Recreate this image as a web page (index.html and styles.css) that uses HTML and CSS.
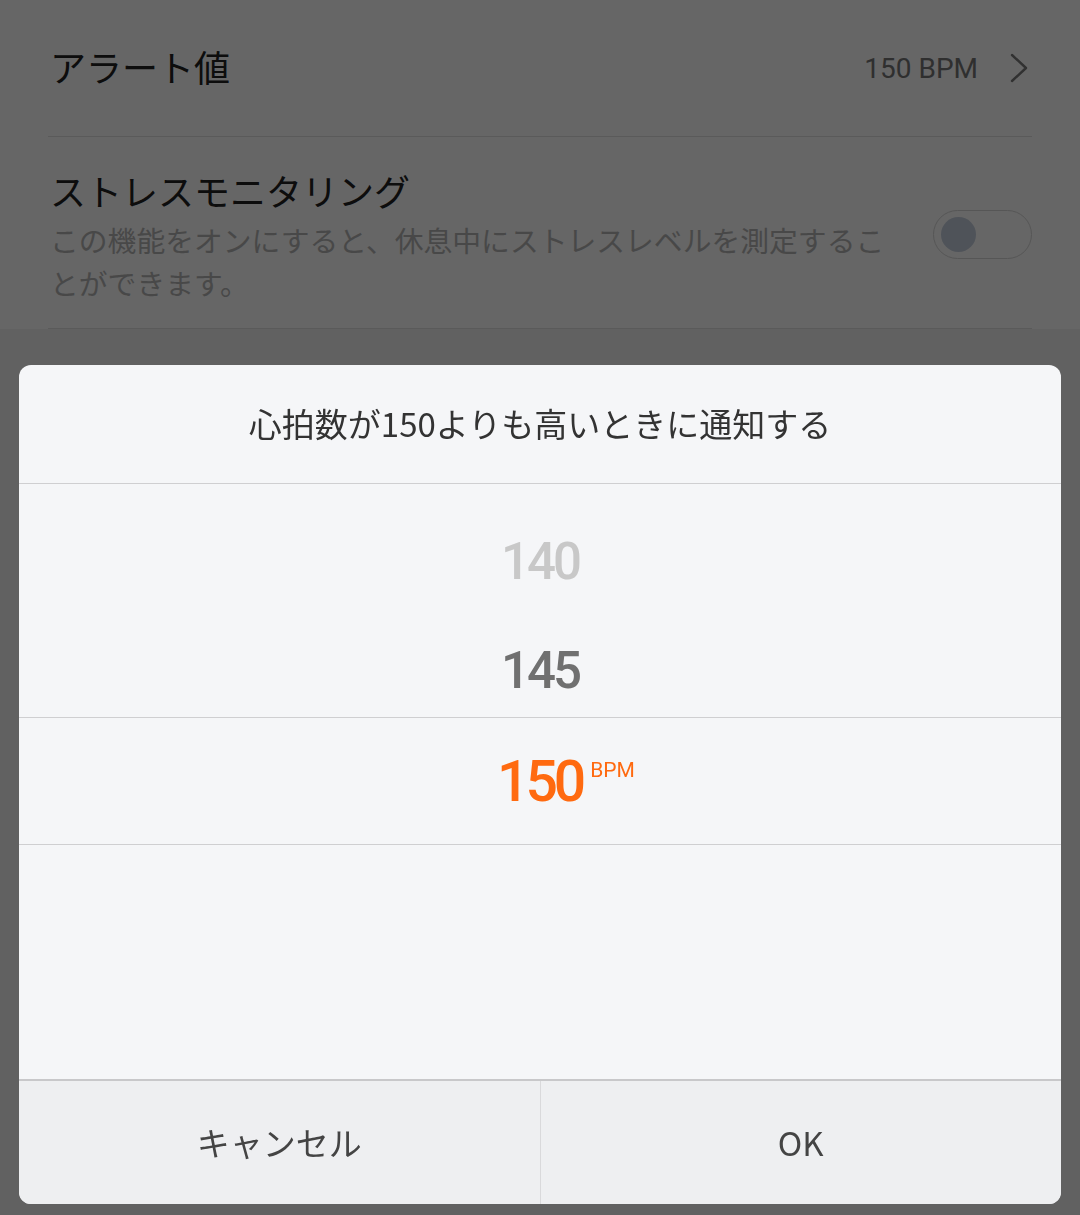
FILE: index.html
```html
<!DOCTYPE html>
<html lang="ja">
<head>
    <meta charset="UTF-8">
    <meta name="viewport" content="width=device-width, initial-scale=1.0">
    <title>心拍数アラート</title>
    <link rel="stylesheet" href="styles.css">
</head>
<body>
    <div class="settings">
        <div class="row">
            <div class="row-title row-title-single">アラート値</div>
            <div class="row-value">150 BPM</div>
            <svg class="chevron" width="18" height="30" viewBox="0 0 18 30">
                <polyline points="2,2 16,15 2,28" fill="none" stroke="#7a7a7a" stroke-width="2.4" stroke-linejoin="round" stroke-linecap="round"/>
            </svg>
        </div>
        <div class="row row-tall">
            <div class="row-text">
                <div class="row-title">ストレスモニタリング</div>
                <div class="row-sub">この機能をオンにすると、休息中にストレスレベルを測定することができます。</div>
            </div>
            <div class="toggle"><span class="knob"></span></div>
        </div>
    </div>

    <div class="overlay"></div>

    <div class="dialog">
        <div class="dialog-title">心拍数が150よりも高いときに通知する</div>
        <div class="picker">
            <div class="pick pick-far">140</div>
            <div class="pick pick-near">145</div>
            <div class="pick pick-selected">150<span class="unit">BPM</span></div>
        </div>
        <div class="dialog-buttons">
            <button class="btn">キャンセル</button>
            <button class="btn">OK</button>
        </div>
    </div>
</body>
</html>
```

FILE: styles.css
```css
body {
    margin: 0;
    height: 1215px;
    background-color: #f3f3f3;
    font-family: "Noto Sans CJK JP", Roboto, sans-serif;
    overflow: hidden;
}
.settings {
    background-color: #fff;
    padding: 0 48px;
}
.row {
    display: flex;
    align-items: center;
    height: 137px;
    box-sizing: border-box;
    border-bottom: 1px solid #e2e2e2;
}
.row-title {
    font-size: 36px;
    line-height: 50px;
    color: #222;
    padding-left: 2px;
}
.row-title-single {
    padding-bottom: 5px;
}
.row-value {
    margin-left: auto;
    font-family: Roboto, sans-serif;
    font-size: 28px;
    color: #777;
}
.chevron {
    margin-left: 32px;
    margin-right: 4px;
}
.row-tall {
    height: auto;
    padding: 28px 0 24px;
}
.row-text {
    flex: 1;
}
.row-sub {
    width: 850px;
    margin-top: 3px;
    padding-left: 2px;
    font-size: 28.8px;
    line-height: 43px;
    color: #b5b5b5;
}
.toggle {
    width: 90px;
    height: 47px;
    border: 1.5px solid #d6d6d6;
    border-radius: 26px;
    display: flex;
    align-items: center;
    padding-left: 7px;
}
.knob {
    width: 35px;
    height: 35px;
    border-radius: 50%;
    background-color: #c6d0df;
}
.overlay {
    position: fixed;
    top: 0;
    left: 0;
    right: 0;
    bottom: 0;
    background-color: rgba(0, 0, 0, 0.6);
}
.dialog {
    position: fixed;
    left: 19px;
    right: 19px;
    bottom: 11px;
    height: 839px;
    background-color: #f5f6f8;
    border-radius: 12px;
    overflow: hidden;
    display: flex;
    flex-direction: column;
}
.dialog-title {
    height: 119px;
    border-bottom: 1px solid #cfcfd1;
    display: flex;
    align-items: center;
    justify-content: center;
    font-size: 33px;
    color: #333;
    padding-bottom: 2px;
    box-sizing: border-box;
}
.picker {
    flex: 1;
    padding-top: 23px;
    font-family: Roboto, sans-serif;
    font-weight: 500;
}
.pick {
    display: flex;
    align-items: center;
    justify-content: center;
    box-sizing: border-box;
    font-size: 51px;
    letter-spacing: -3px;
}
.pick-far {
    height: 108px;
    color: #c8c8c8;
}
.pick-near {
    height: 102px;
    padding-top: 8px;
    color: #707070;
}
.pick-selected {
    height: 128px;
    border-top: 1px solid #cfcfd1;
    border-bottom: 1px solid #cfcfd1;
    color: #ff6a10;
    font-size: 57px;
    letter-spacing: -4px;
    padding-left: 52px;
}
.unit {
    align-self: flex-start;
    margin-top: 40px;
    margin-left: 8px;
    font-size: 21px;
    font-weight: 400;
    letter-spacing: 0;
}
.dialog-buttons {
    display: flex;
    height: 123px;
    border-top: 2px solid #c8c8ca;
    background-color: #eeeff1;
}
.btn {
    flex: 1;
    border: none;
    background: none;
    font-family: "Noto Sans CJK JP", Roboto, sans-serif;
    font-size: 33px;
    color: #444;
    padding: 0 0 2px;
}
.btn + .btn {
    border-left: 1px solid #d9d9db;
}
```
